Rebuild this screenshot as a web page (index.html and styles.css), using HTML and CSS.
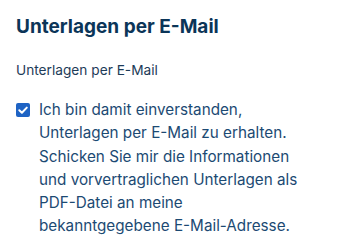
FILE: index.html
```html
<!DOCTYPE html>
<html lang="de">
<head>
<meta charset="utf-8">
<link rel="stylesheet" href="styles.css">
</head>
<body>
<section class="panel">
  <h2 class="title">Unterlagen per E-Mail</h2>
  <p class="label">Unterlagen per E-Mail</p>
  <label class="consent">
    <span class="box">
      <svg viewBox="0 0 14 14" width="14" height="14"><rect x="0" y="0" width="14" height="14" rx="2" fill="#1e63c4"/><path d="M3.3 7.2 L5.9 9.7 L10.8 4.6" fill="none" stroke="#fff" stroke-width="2" stroke-linecap="round" stroke-linejoin="round"/></svg>
    </span>
    <span class="text">Ich bin damit einverstanden, Unterlagen per E-Mail zu erhalten. Schicken Sie mir die Informationen und vorvertraglichen Unterlagen als PDF-Datei an meine bekanntgegebene E-Mail-Adresse.</span>
  </label>
</section>
</body>
</html>
```
FILE: styles.css
```css
html, body { margin: 0; padding: 0; background: #fff; }
body { font-family: Inter, "Noto Sans", sans-serif; }
.panel { padding: 16px 16px 0 16px; width: 300px; }
.title { margin: 0; font-size: 19px; line-height: 22px; font-weight: 700; color: #0b3558; }
.label { margin: 24px 0 0 0; font-size: 13.7px; line-height: 16px; color: #1d3b58; }
.consent { display: flex; gap: 9px; margin-top: 20px; align-items: flex-start; }
.box { flex: none; width: 14px; height: 14px; margin-top: 5px; display: block; }
.box svg { display: block; }
.text { font-size: 15.25px; line-height: 23.3px; color: #1c4a73; }
```
